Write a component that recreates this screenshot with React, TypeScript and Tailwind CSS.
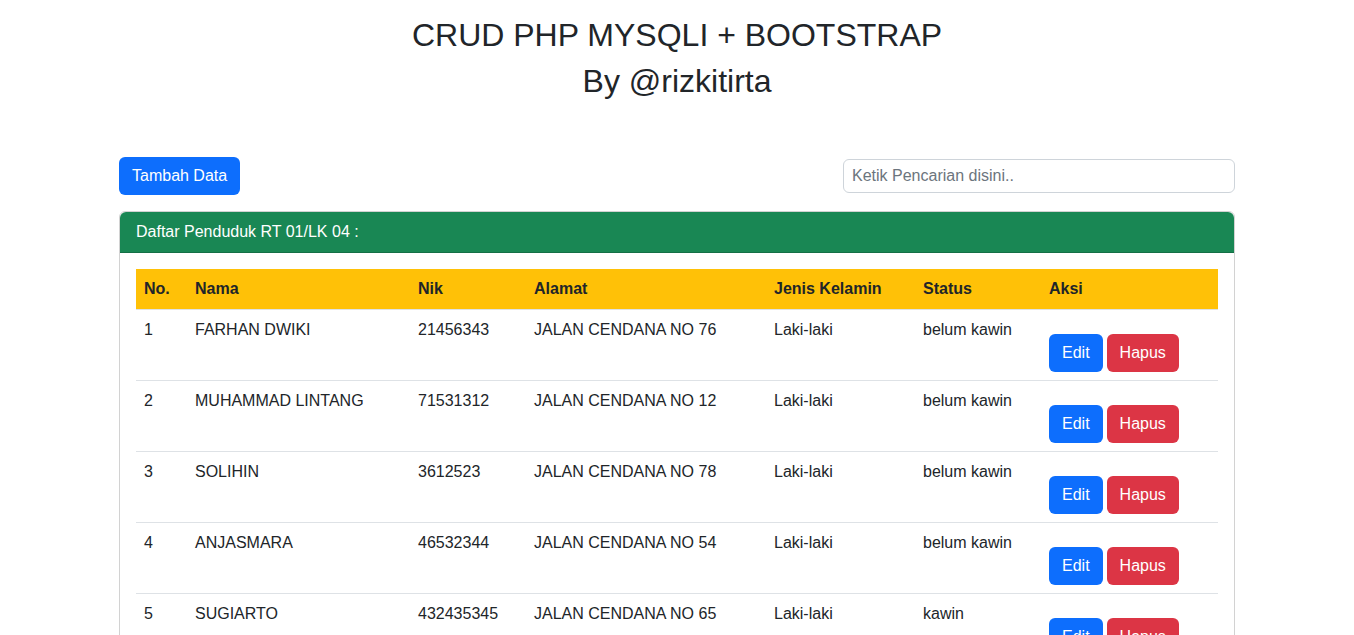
import { type FC } from "react";

interface Penduduk {
	nama: string;
	nik: string;
	alamat: string;
	jk: string;
	status: string;
}

const pendudukData: Penduduk[] = [
	{ nama: "FARHAN DWIKI", nik: "21456343", alamat: "JALAN CENDANA NO 76", jk: "Laki-laki", status: "belum kawin" },
	{ nama: "MUHAMMAD LINTANG", nik: "71531312", alamat: "JALAN CENDANA NO 12", jk: "Laki-laki", status: "belum kawin" },
	{ nama: "SOLIHIN", nik: "3612523", alamat: "JALAN CENDANA NO 78", jk: "Laki-laki", status: "belum kawin" },
	{ nama: "ANJASMARA", nik: "46532344", alamat: "JALAN CENDANA NO 54", jk: "Laki-laki", status: "belum kawin" },
	{ nama: "SUGIARTO", nik: "432435345", alamat: "JALAN CENDANA NO 65", jk: "Laki-laki", status: "kawin" },
];

const PendudukTable: FC = () => {
	return (
		<table className="w-full table-fixed border-collapse text-left">
			<colgroup>
				<col className="w-[51px]" />
				<col className="w-[223px]" />
				<col className="w-[116px]" />
				<col className="w-[240px]" />
				<col className="w-[149px]" />
				<col className="w-[126px]" />
				<col className="w-[177px]" />
			</colgroup>
			<thead>
				<tr className="border-b border-[#dee2e6] bg-[#ffc107]">
					<th className="p-2 font-bold">No.</th>
					<th className="p-2 font-bold">Nama</th>
					<th className="p-2 font-bold">Nik</th>
					<th className="p-2 font-bold">Alamat</th>
					<th className="p-2 font-bold">Jenis Kelamin</th>
					<th className="p-2 font-bold">Status</th>
					<th className="p-2 font-bold">Aksi</th>
				</tr>
			</thead>
			<tbody>
				{pendudukData.map((item, index) => (
					<tr key={item.nik} className="border-b border-[#dee2e6] align-top">
						<td className="p-2">{index + 1}</td>
						<td className="p-2">{item.nama}</td>
						<td className="p-2">{item.nik}</td>
						<td className="p-2">{item.alamat}</td>
						<td className="p-2">{item.jk}</td>
						<td className="p-2">{item.status}</td>
						<td className="p-2">
							<div className="mt-4 flex gap-1">
								<button className="h-[38px] rounded-md bg-[#0d6efd] px-[13px] text-white">
									Edit
								</button>
								<button className="h-[38px] rounded-md bg-[#dc3545] px-[13px] text-white">
									Hapus
								</button>
							</div>
						</td>
					</tr>
				))}
			</tbody>
		</table>
	);
};

export default function App() {
	return (
		<div className="min-h-screen bg-white font-['Liberation_Sans',Arial,sans-serif] text-base leading-6 text-[#212529]">
			<div className="mx-auto w-[1140px] px-3 pt-4">
				<h2 className="mb-2 text-center text-[32px] leading-[38.4px] font-normal">
					CRUD PHP MYSQLI + BOOTSTRAP
				</h2>
				<h2 className="mb-2 text-center text-[32px] leading-[38.4px] font-normal">
					By @rizkitirta
				</h2>

				<div className="mt-14 flex items-center justify-between">
					<button className="h-[38px] rounded-md bg-[#0d6efd] px-[13px] text-white">
						Tambah Data
					</button>
					<input
						type="text"
						placeholder="Ketik Pencarian disini.."
						className="h-[34px] w-[392px] rounded-md border border-[#ced4da] px-2 text-[#212529] placeholder:text-[#6c757d] outline-none"
					/>
				</div>

				<div className="mt-4 rounded-md border border-black/[0.175]">
					<div className="rounded-t-md border-b border-black/[0.175] bg-[#198754] px-4 py-2 text-white">
						Daftar Penduduk RT 01/LK 04 :
					</div>
					<div className="p-4">
						<PendudukTable />
					</div>
				</div>
			</div>
		</div>
	);
}
